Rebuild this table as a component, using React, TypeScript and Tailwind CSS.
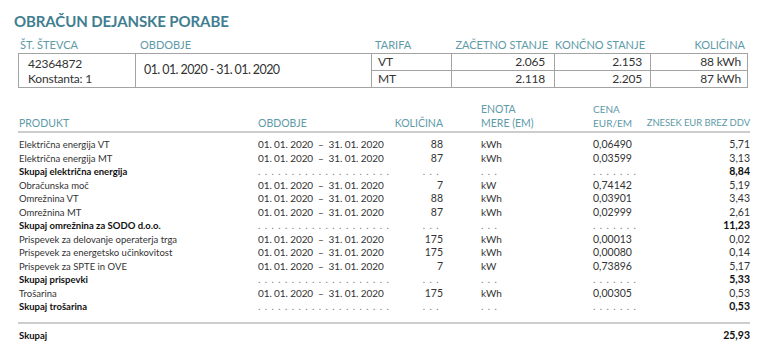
import React from "react";

type Row = {
  name: string;
  bold?: boolean;
  qty?: string;
  unit?: string;
  price?: string;
  amount: string;
};

const rows: Row[] = [
  { name: "Električna energija VT", qty: "88", unit: "kWh", price: "0,06490", amount: "5,71" },
  { name: "Električna energija MT", qty: "87", unit: "kWh", price: "0,03599", amount: "3,13" },
  { name: "Skupaj električna energija", bold: true, amount: "8,84" },
  { name: "Obračunska moč", qty: "7", unit: "kW", price: "0,74142", amount: "5,19" },
  { name: "Omrežnina VT", qty: "88", unit: "kWh", price: "0,03901", amount: "3,43" },
  { name: "Omrežnina MT", qty: "87", unit: "kWh", price: "0,02999", amount: "2,61" },
  { name: "Skupaj omrežnina za SODO d.o.o.", bold: true, amount: "11,23" },
  { name: "Prispevek za delovanje operaterja trga", qty: "175", unit: "kWh", price: "0,00013", amount: "0,02" },
  { name: "Prispevek za energetsko učinkovitost", qty: "175", unit: "kWh", price: "0,00080", amount: "0,14" },
  { name: "Prispevek za SPTE in OVE", qty: "7", unit: "kW", price: "0,73896", amount: "5,17" },
  { name: "Skupaj prispevki", bold: true, amount: "5,33" },
  { name: "Trošarina", qty: "175", unit: "kWh", price: "0,00305", amount: "0,53" },
  { name: "Skupaj trošarina", bold: true, amount: "0,53" },
];

function Dots({ n }: { n: number }) {
  return (
    <span className="text-[#777] text-[10px] tracking-[4.4px] font-normal">{".".repeat(n)}</span>
  );
}

export default function App() {
  return (
    <div
      className="w-[757px] h-[363px] bg-white text-[#333] overflow-hidden"
      style={{ fontFamily: "Lato, 'Open Sans', sans-serif" }}
    >
      <div className="pl-[14px] pt-[12px]">
        <h1 className="text-[15px] leading-[18px] font-bold text-[#3f7e90] tracking-[-0.1px]">
          OBRAČUN DEJANSKE PORABE
        </h1>
      </div>

      {/* meter table */}
      <div className="ml-[18px] mt-[8px] w-[730px]">
        <div className="grid grid-cols-[118px_236px_80px_103px_96px_97px] text-[11px] leading-[14px] text-[#5e9aa8]">
          <div className="pl-[2px]">ŠT. ŠTEVCA</div>
          <div className="pl-[4px]">OBDOBJE</div>
          <div className="pl-[3px]">TARIFA</div>
          <div className="text-right pr-[7px]">ZAČETNO STANJE</div>
          <div className="text-right pr-[6px]">KONČNO STANJE</div>
          <div className="text-right pr-[3px]">KOLIČINA</div>
        </div>
        <div className="mt-[1px] border border-[#a3a3a3] grid grid-cols-[117px_236px_80px_103px_96px_96px] grid-rows-[17px_16px] tracking-[-0.2px]">
          <div className="row-span-2 border-r border-[#a3a3a3] pl-[9px] pt-[1px] text-[12px] leading-[15px] flex flex-col justify-center">
            <div>42364872</div>
            <div>Konstanta: 1</div>
          </div>
          <div className="row-span-2 border-r border-[#a3a3a3] pl-[8px] text-[12.5px] tracking-[-0.6px] flex items-center">
            01. 01. 2020 - 31. 01. 2020
          </div>
          <div className="border-r border-b border-[#a3a3a3] pl-[6px] text-[12px] leading-[16px]">VT</div>
          <div className="border-r border-b border-[#a3a3a3] pr-[9px] text-right text-[12px] leading-[16px]">2.065</div>
          <div className="border-r border-b border-[#a3a3a3] pr-[8px] text-right text-[12px] leading-[16px]">2.153</div>
          <div className="border-b border-[#a3a3a3] pr-[6px] text-right text-[12px] leading-[16px]">88 kWh</div>
          <div className="border-r border-[#a3a3a3] pl-[6px] text-[12px] leading-[16px]">MT</div>
          <div className="border-r border-[#a3a3a3] pr-[9px] text-right text-[12px] leading-[16px]">2.118</div>
          <div className="border-r border-[#a3a3a3] pr-[8px] text-right text-[12px] leading-[16px]">2.205</div>
          <div className="pr-[6px] text-right text-[12px] leading-[16px]">87 kWh</div>
        </div>
      </div>

      {/* product table */}
      <div className="ml-[18px] mt-[14px] w-[732px]">
        <div className="grid grid-cols-[240px_130px_55px_150px_37px_120px] items-end text-[10.5px] leading-[14px] text-[#5e9aa8] pb-[1px] border-b-2 border-[#cdcdcd]">
          <div className="pl-[1px]">PRODUKT</div>
          <div>OBDOBJE</div>
          <div className="text-right">KOLIČINA</div>
          <div className="pl-[38px]">
            ENOTA
            <br />
            MERE (EM)
          </div>
          <div className="whitespace-nowrap text-[10px]">
            CENA
            <br />
            EUR/EM
          </div>
          <div className="text-right whitespace-nowrap text-[9.5px] tracking-[-0.1px]">ZNESEK EUR BREZ DDV</div>
        </div>

        <div className="pt-[5px] pb-[8px] border-b-2 border-[#cdcdcd]">
          {rows.map((r, i) => (
            <div
              key={i}
              className={`grid grid-cols-[240px_130px_55px_150px_37px_120px] text-[10px] leading-[13.5px] ${
                r.bold ? "font-bold text-[#111]" : ""
              }`}
            >
              <div className="pl-[1px] whitespace-nowrap text-[9.5px]">{r.name}</div>
              <div className="whitespace-nowrap font-normal">
                {r.bold ? (
                  <Dots n={20} />
                ) : (
                  <span className="tracking-[-0.1px]">01. 01. 2020 &nbsp;– &nbsp;31. 01. 2020</span>
                )}
              </div>
              <div className="text-right font-normal">
                {r.bold ? <Dots n={3} /> : <span className="text-[10.5px]">{r.qty}</span>}
              </div>
              <div className="pl-[38px] font-normal">{r.bold ? <Dots n={3} /> : r.unit}</div>
              <div className="text-right font-normal whitespace-nowrap">
                {r.bold ? <Dots n={7} /> : <span className="text-[10.5px]">{r.price}</span>}
              </div>
              <div className="text-right">
                <span className="text-[10.5px]">{r.amount}</span>
              </div>
            </div>
          ))}
        </div>

        <div className="mt-[5px] flex justify-between text-[9.5px] leading-[13.5px] font-bold text-[#111]">
          <div className="pl-[1px]">Skupaj</div>
          <div className="text-[10.5px]">25,93</div>
        </div>
      </div>
    </div>
  );
}
